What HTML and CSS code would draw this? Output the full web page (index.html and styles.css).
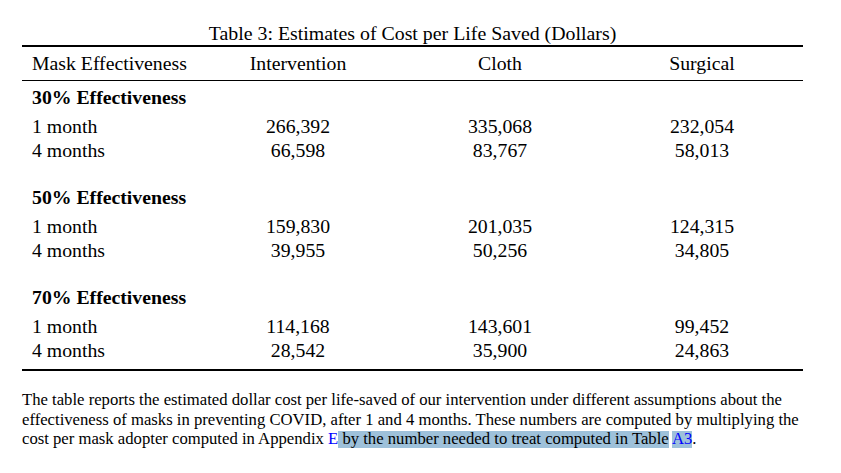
FILE: index.html
```html
<!DOCTYPE html>
<html lang="en">
<head>
<meta charset="utf-8">
<title>Table 3: Estimates of Cost per Life Saved (Dollars)</title>
<link rel="stylesheet" href="styles.css">
</head>
<body>
<div class="page">
  <div class="caption">Table 3: Estimates of Cost per Life Saved (Dollars)</div>
  <div class="table">
    <div class="head row">
      <div class="label">Mask Effectiveness</div>
      <div class="num">Intervention</div>
      <div class="num">Cloth</div>
      <div class="num">Surgical</div>
    </div>
    <div class="body">
      <div class="group">
        <div class="group-title">30% Effectiveness</div>
        <div class="row first">
          <div class="label">1 month</div>
          <div class="num">266,392</div>
          <div class="num">335,068</div>
          <div class="num">232,054</div>
        </div>
        <div class="row">
          <div class="label">4 months</div>
          <div class="num">66,598</div>
          <div class="num">83,767</div>
          <div class="num">58,013</div>
        </div>
      </div>
      <div class="group">
        <div class="group-title">50% Effectiveness</div>
        <div class="row first">
          <div class="label">1 month</div>
          <div class="num">159,830</div>
          <div class="num">201,035</div>
          <div class="num">124,315</div>
        </div>
        <div class="row">
          <div class="label">4 months</div>
          <div class="num">39,955</div>
          <div class="num">50,256</div>
          <div class="num">34,805</div>
        </div>
      </div>
      <div class="group">
        <div class="group-title">70% Effectiveness</div>
        <div class="row first">
          <div class="label">1 month</div>
          <div class="num">114,168</div>
          <div class="num">143,601</div>
          <div class="num">99,452</div>
        </div>
        <div class="row">
          <div class="label">4 months</div>
          <div class="num">28,542</div>
          <div class="num">35,900</div>
          <div class="num">24,863</div>
        </div>
      </div>
    </div>
  </div>
  <p class="note">The table reports the estimated dollar cost per life-saved of our intervention under different assumptions about the effectiveness of masks in preventing COVID, after 1 and 4 months. These numbers are computed by multiplying the cost per mask adopter computed in Appendix <a class="ref" href="#">E</a><span class="sel"> by the number needed to treat computed in Table</span> <a class="ref sel" href="#">A3</a>.</p>
</div>
</body>
</html>
```

FILE: styles.css
```css
html, body {
  margin: 0;
  padding: 0;
  background: #ffffff;
}

body {
  font-family: "Liberation Serif", "Times New Roman", serif;
  color: #000000;
}

.page {
  width: 781px;
  margin-left: 22px;
  padding-top: 21px;
}

.caption {
  text-align: center;
  font-size: 19.85px;
  line-height: 24px;
}

.table {
  font-size: 19.75px;
  line-height: 24px;
  border-top: 2px solid #000;
  border-bottom: 2px solid #000;
}

.row {
  display: grid;
  grid-template-columns: 175px 202px 202px 202px;
}

.head {
  padding: 4px 0 5px;
  border-bottom: 1px solid #000;
}

.label {
  padding-left: 10px;
  white-space: nowrap;
}

.num {
  text-align: center;
  white-space: nowrap;
}

.body {
  padding: 4px 0 7px;
}

.group + .group {
  margin-top: 23px;
}

.group-title {
  font-weight: bold;
  padding-left: 10px;
}

.row.first {
  margin-top: 5px;
}

.note {
  margin: 19px 0 0;
  font-size: 16.68px;
  line-height: 19.5px;
}

.ref {
  color: #0000ff;
  text-decoration: none;
}

.sel {
  background: linear-gradient(to bottom, transparent 2px, #9ec1da 2px);
}
```
